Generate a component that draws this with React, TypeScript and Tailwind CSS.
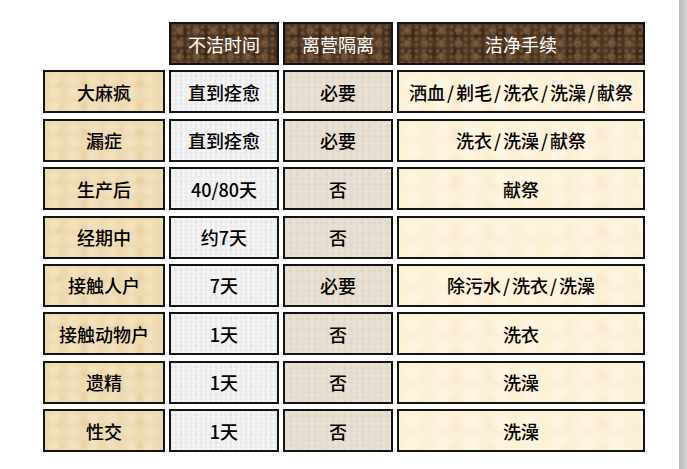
const headers = ['不洁时间', '离营隔离', '洁净手续'];

interface Row {
  cause: string;
  time: string;
  isolate: string;
  rite: string;
}

const rows: Row[] = [
  { cause: '大麻疯', time: '直到痊愈', isolate: '必要', rite: '洒血/剃毛/洗衣/洗澡/献祭' },
  { cause: '漏症', time: '直到痊愈', isolate: '必要', rite: '洗衣/洗澡/献祭' },
  { cause: '生产后', time: '40/80天', isolate: '否', rite: '献祭' },
  { cause: '经期中', time: '约7天', isolate: '否', rite: '' },
  { cause: '接触人户', time: '7天', isolate: '必要', rite: '除污水/洗衣/洗澡' },
  { cause: '接触动物户', time: '1天', isolate: '否', rite: '洗衣' },
  { cause: '遗精', time: '1天', isolate: '否', rite: '洗澡' },
  { cause: '性交', time: '1天', isolate: '否', rite: '洗澡' },
];

const cell =
  'flex h-[43px] items-center justify-center border-2 border-[#141414] text-[18px] font-medium leading-none text-black';

// textures are faked with soft speckles over a flat colour
const marble =
  'bg-[#4d3523] bg-[radial-gradient(circle,#6c4e33_1px,transparent_3px),radial-gradient(circle,#7a5c3e_2px,transparent_5px),radial-gradient(circle,#3c2818_3px,transparent_8px)] bg-[length:7px_6px,17px_13px,23px_19px]';
const parchment =
  'bg-[#eedab1] bg-[radial-gradient(circle,#f2e1bd_3px,transparent_8px),radial-gradient(circle,#e8d2a4_2px,transparent_6px)] bg-[length:19px_14px,27px_23px]';
const granite =
  'bg-[#ececec] bg-[radial-gradient(circle,#f6f6f6_1px,transparent_2px),radial-gradient(circle,#e2e2e2_1px,transparent_2px)] bg-[length:5px_4px,7px_9px]';
const sand =
  'bg-[#e4dbcd] bg-[radial-gradient(circle,#eae2d6_1px,transparent_3px),radial-gradient(circle,#ddd3c3_1px,transparent_3px)] bg-[length:6px_5px,9px_11px]';
const cream =
  'bg-[#fcf0d7] bg-[radial-gradient(circle,#fdf4e1_4px,transparent_11px),radial-gradient(circle,#f9ebcf_3px,transparent_9px)] bg-[length:29px_21px,37px_27px]';

function Slashed({ text }: { text: string }) {
  const parts = text.split('/');
  return (
    <span>
      {parts.map((p, i) => (
        <span key={i}>
          {i > 0 && <span className="px-[2px]">/</span>}
          {p}
        </span>
      ))}
    </span>
  );
}

export default function App() {
  return (
    <div
      className="flex h-[469px] w-[687px] bg-white"
      style={{ fontFamily: '"Noto Sans CJK SC", "Noto Sans", sans-serif' }}
    >
      <div className="flex-1 pl-[43px] pt-[22px]">
        <div className="grid grid-cols-[122px_110px_110px_248px] gap-x-[4px] gap-y-[5.4px]">
          <div />
          {headers.map((h) => (
            <div key={h} className={`${cell} ${marble} font-normal text-white`}>
              {h}
            </div>
          ))}
          {rows.map((r) => (
            <div key={r.cause} className="contents">
              <div className={`${cell} ${parchment}`}>{r.cause}</div>
              <div className={`${cell} ${granite}`}>{r.time}</div>
              <div className={`${cell} ${sand}`}>{r.isolate}</div>
              <div className={`${cell} ${cream}`}>
                <Slashed text={r.rite} />
              </div>
            </div>
          ))}
        </div>
      </div>
      <div className="w-[8px] bg-[linear-gradient(90deg,#b9b9b9,#d4d4d4)]" />
    </div>
  );
}
